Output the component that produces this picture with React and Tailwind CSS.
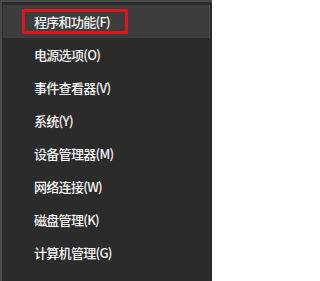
import React from 'react';

const items = [
  '程序和功能(F)',
  '电源选项(O)',
  '事件查看器(V)',
  '系统(Y)',
  '设备管理器(M)',
  '网络连接(W)',
  '磁盘管理(K)',
  '计算机管理(G)',
];

const App = () => {
  return (
    <div
      className="w-[212px] h-[281px] overflow-hidden bg-[#2b2b2b] border-t-2 border-l-2 border-[#4a4a4a] pt-[3px]"
      style={{ fontFamily: '"Noto Sans CJK SC", "Noto Sans", sans-serif' }}
    >
      {items.map((label, i) => (
        <div
          key={label}
          className={`relative flex items-center h-[33px] text-[13px] tracking-[-0.7px] font-medium text-[#f4f4f4] ${
            i === 0 ? 'mx-[1px] mr-[2px] bg-[#3d3d3d] border-r border-[#4a4a4a] pl-[31px]' : 'pl-[32px]'
          }`}
        >
          {label}
          {i === 0 && (
            <div className="absolute left-[19px] top-[4px] w-[106px] h-[25px] border-[3px] border-[#e0141b] rounded-[1px]" />
          )}
        </div>
      ))}
    </div>
  );
};

export default App;
